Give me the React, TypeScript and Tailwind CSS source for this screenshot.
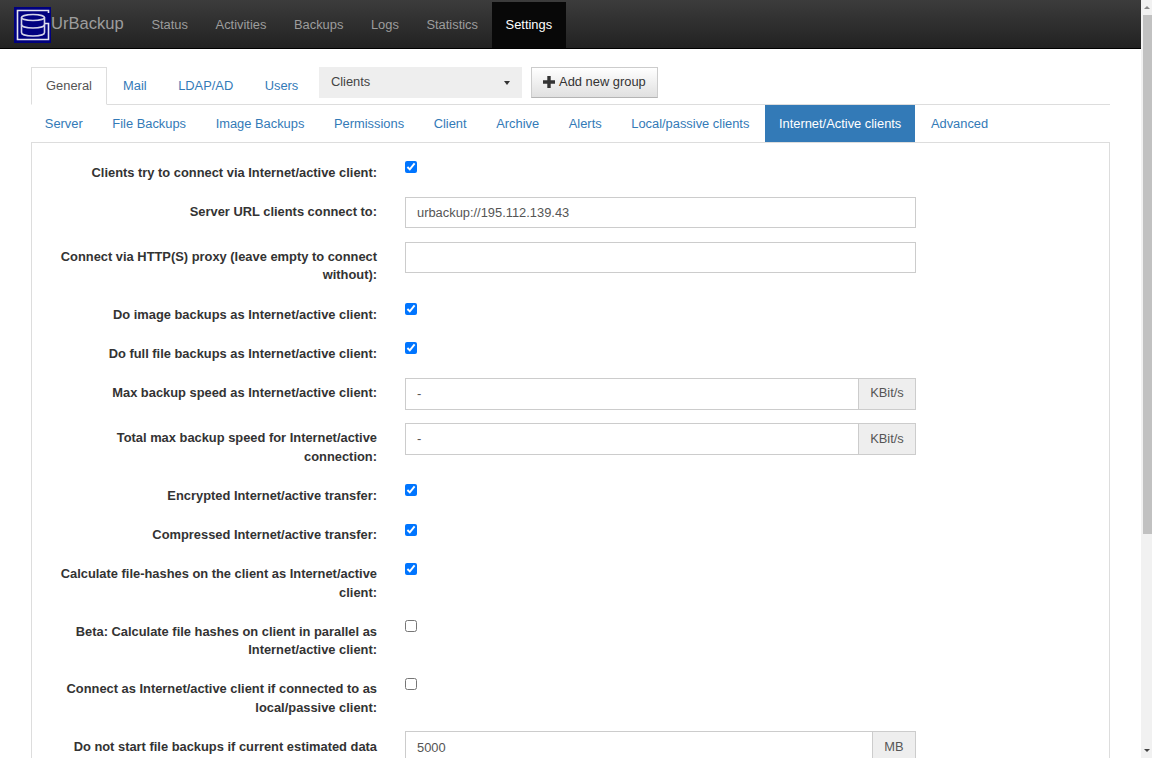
const navItems = ['Status', 'Activities', 'Backups', 'Logs', 'Statistics']
const subTabs = [
  'Server',
  'File Backups',
  'Image Backups',
  'Permissions',
  'Client',
  'Archive',
  'Alerts',
  'Local/passive clients',
  'Internet/Active clients',
  'Advanced',
]

type Row = {
  label: string
  kind: 'check' | 'text' | 'addon'
  checked?: boolean
  value?: string
  unit?: string
  gap: string
}

const rows: Row[] = [
  { label: 'Clients try to connect via Internet/active client:', kind: 'check', checked: true, gap: 'mb-[13.32px]' },
  { label: 'Server URL clients connect to:', kind: 'text', value: 'urbackup://195.112.139.43', gap: 'mb-[11.94px]' },
  { label: 'Connect via HTTP(S) proxy (leave empty to connect without):', kind: 'text', value: '', gap: 'mb-[13.32px]' },
  { label: 'Do image backups as Internet/active client:', kind: 'check', checked: true, gap: 'mb-[13.32px]' },
  { label: 'Do full file backups as Internet/active client:', kind: 'check', checked: true, gap: 'mb-[13.32px]' },
  { label: 'Max backup speed as Internet/active client:', kind: 'addon', value: '-', unit: 'KBit/s', gap: 'mb-[12px]' },
  { label: 'Total max backup speed for Internet/active connection:', kind: 'addon', value: '-', unit: 'KBit/s', gap: 'mb-[13.32px]' },
  { label: 'Encrypted Internet/active transfer:', kind: 'check', checked: true, gap: 'mb-[13.32px]' },
  { label: 'Compressed Internet/active transfer:', kind: 'check', checked: true, gap: 'mb-[13.32px]' },
  { label: 'Calculate file-hashes on the client as Internet/active client:', kind: 'check', checked: true, gap: 'mb-[13.32px]' },
  { label: 'Beta: Calculate file hashes on client in parallel as Internet/active client:', kind: 'check', checked: false, gap: 'mb-[13.32px]' },
  { label: 'Connect as Internet/active client if connected to as local/passive client:', kind: 'check', checked: false, gap: 'mb-[12.92px]' },
  { label: 'Do not start file backups if current estimated data usage limit per month is lower than:', kind: 'addon', value: '5000', unit: 'MB', gap: 'mb-[13.32px]' },
]

function Logo() {
  return (
    <svg width="37" height="36" viewBox="0 0 37 36" className="mt-[2px] block shrink-0">
      <rect x="0" y="0" width="37" height="36" fill="#00007f" />
      <path d="M34.5 6V3.5H3.5V32.5H34.5V16.5H31" fill="none" stroke="#e4e4f0" strokeWidth="1.6" />
      <ellipse cx="19" cy="10.5" rx="11.5" ry="3" fill="none" stroke="#d4d4e8" strokeWidth="1.6" />
      <path d="M7.5 10.5V25.5C7.5 27.5 12.5 29 19 29S30.5 27.5 30.5 25.5V10.5" fill="none" stroke="#d4d4e8" strokeWidth="1.6" />
      <path d="M7.5 17.5C7.5 19.5 12.5 21 19 21S30.5 19.5 30.5 17.5" fill="none" stroke="#d4d4e8" strokeWidth="1.6" />
    </svg>
  )
}

function FormRow({ row }: { row: Row }) {
  return (
    <div className={`flex ${row.gap}`}>
      <label className="ml-[15px] w-[330px] shrink-0 pt-[7.5px] text-right font-bold text-[#333]">{row.label}</label>
      <div className="ml-[28px] w-[511px]">
        {row.kind === 'check' && (
          <input type="checkbox" defaultChecked={row.checked} className="m-0 mt-[5.1px] block h-[12px] w-[12px]" />
        )}
        {row.kind === 'text' && (
          <input
            type="text"
            readOnly
            value={row.value}
            className="mt-[1.6px] block h-[31.28px] w-full border border-[#ccc] bg-white px-[11px] text-[12.88px] text-[#555] outline-none"
          />
        )}
        {row.kind === 'addon' && (
          <div className="mt-[1.2px] flex h-[32px]">
            <input
              type="text"
              readOnly
              value={row.value}
              className="block h-full min-w-0 flex-1 border border-r-0 border-[#ccc] bg-white px-[11px] text-[12.88px] text-[#555] outline-none"
            />
            <span
              className={
                row.unit === 'MB'
                  ? 'flex w-[44px] items-center justify-center border border-[#ccc] bg-[#eee] text-[12.88px] text-[#555]'
                  : 'flex w-[58px] items-center justify-center border border-[#ccc] bg-[#eee] text-[12.88px] text-[#555]'
              }
            >
              {row.unit}
            </span>
          </div>
        )}
      </div>
    </div>
  )
}

export default function App() {
  return (
    <div className="flex h-[758px] w-[1152px] overflow-hidden bg-white font-['Liberation_Sans',Arial,sans-serif] text-[12.88px] leading-[18.4px] text-[#333]">
      <div className="w-[1141px] shrink-0 overflow-hidden">
        {/* navbar */}
        <nav className="flex h-[49px] items-start border-b border-black bg-gradient-to-b from-[#3c3c3c] to-[#222] pl-[14px]">
          <div className="flex h-[48px] items-center">
            <Logo />
            <span className="text-[16.56px] text-[#9d9d9d]">UrBackup</span>
          </div>
          <ul className="ml-[14px] flex pt-[2px]">
            {navItems.map((item) => (
              <li key={item} className="flex h-[46px] items-center px-[13.8px] text-[#9d9d9d]">
                {item}
              </li>
            ))}
            <li className="flex h-[46px] items-center bg-[#080808] px-[13.8px] text-white">Settings</li>
          </ul>
        </nav>

        <div className="ml-[31px] w-[1079px]">
          {/* top tabs */}
          <div className="mt-[18px] flex h-[38px] items-start border-b border-[#ddd]">
            <div className="mr-[1.3px] flex h-[38px] w-[76px] items-center justify-center border border-[#ddd] border-b-white bg-white pt-[1px] text-[#555]">
              General
            </div>
            {['Mail', 'LDAP/AD', 'Users'].map((t) => (
              <div key={t} className="mr-[1.84px] flex h-[38px] items-center border border-transparent px-[13.8px] pt-[1px] text-[#337ab7]">
                {t}
              </div>
            ))}
            <div className="ml-[4px] flex h-[31px] w-[203px] items-center justify-between bg-[#eee] px-[12px] text-[#444]">
              Clients
              <span className="mt-px h-0 w-0 border-x-[3.5px] border-t-[4px] border-x-transparent border-t-[#333]" />
            </div>
            <button className="ml-[9px] flex h-[31px] w-[127px] items-center justify-center gap-[4px] border border-[#ccc] border-b-[#b4b4b4] bg-gradient-to-b from-white to-[#e0e0e0] text-[12.88px] text-[#333]">
              <svg width="12" height="12" viewBox="0 0 12 12" className="-mt-[2px] block">
                <path d="M4.3 0H7.7V4.3H12V7.7H7.7V12H4.3V7.7H0V4.3H4.3Z" fill="#333" />
              </svg>
              Add new group
            </button>
          </div>

          {/* sub tabs */}
          <div className="flex h-[37px]">
            {subTabs.map((t) => (
              <div
                key={t}
                className={
                  t === 'Internet/Active clients'
                    ? 'mr-[2px] flex items-center bg-[#337ab7] px-[13.8px] pt-[1px] text-white'
                    : 'mr-[2px] flex items-center px-[13.8px] pt-[1px] text-[#337ab7]'
                }
              >
                {t}
              </div>
            ))}
          </div>

          {/* form panel */}
          <div className="h-[700px] border border-[#ddd] pt-[13.36px]">
            {rows.map((row) => (
              <FormRow key={row.label} row={row} />
            ))}
          </div>
        </div>
      </div>

      {/* scrollbar */}
      <div className="flex h-[758px] w-[11px] shrink-0 flex-col bg-[#f1f1f1]">
        <div className="flex h-[15px] items-center justify-center pl-[1px]">
          <span className="h-0 w-0 border-x-[3px] border-b-[3px] border-x-transparent border-b-[#888]" />
        </div>
        <div className="ml-[2px] h-[519px] w-[9px] bg-[#c1c1c1]" />
        <div className="flex-1" />
        <div className="flex h-[15px] items-center justify-center pl-[1px]">
          <span className="h-0 w-0 border-x-[3px] border-t-[3px] border-x-transparent border-t-[#444]" />
        </div>
      </div>
    </div>
  )
}
